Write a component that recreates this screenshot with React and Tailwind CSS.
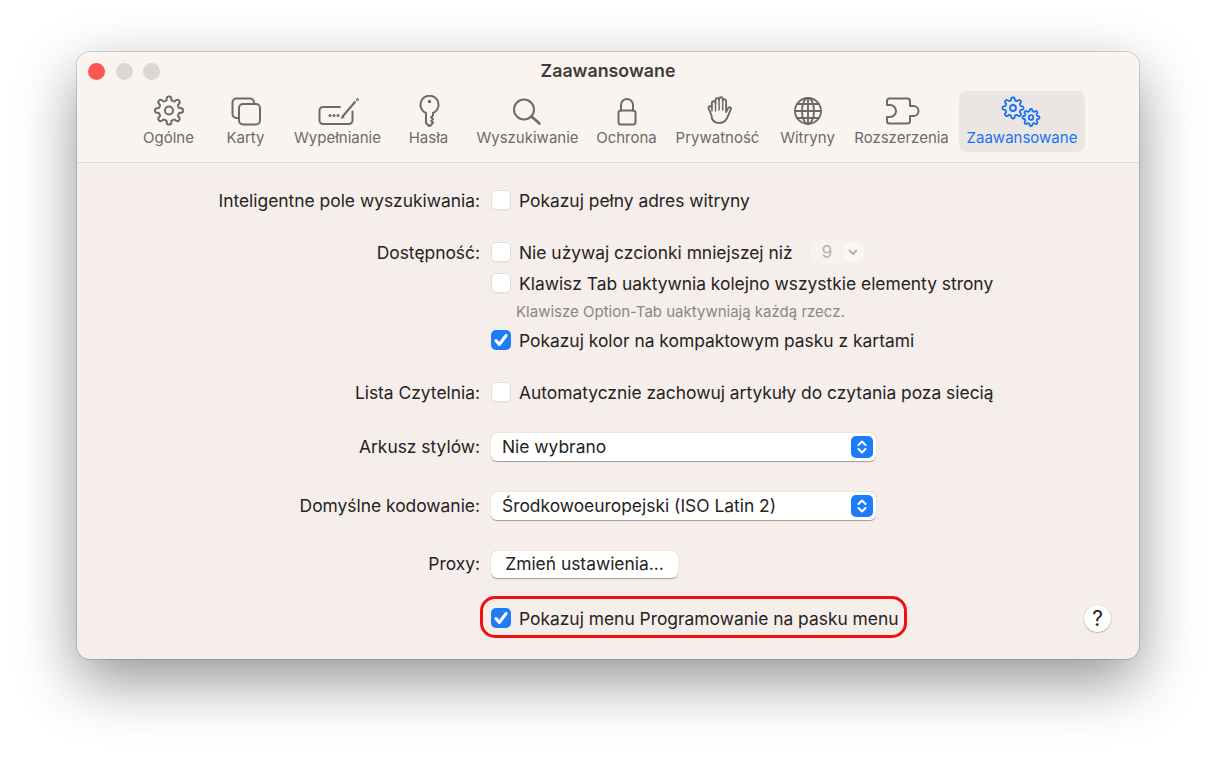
import React from "react";

const gear = (cx, cy, ro, ri, n = 8) => {
  let d = "";
  const step = (Math.PI * 2) / n;
  const p = (r, a) => `${(cx + r * Math.cos(a)).toFixed(2)} ${(cy + r * Math.sin(a)).toFixed(2)}`;
  for (let i = 0; i < n; i++) {
    const a = i * step - Math.PI / 2;
    const w = step * 0.2;
    d += `${i === 0 ? "M" : "L"}${p(ri, a - step * 0.3)} Q${p(ro, a - w * 1.2)} ${p(ro, a - w * 0.3)} `;
    d += `L${p(ro, a + w * 0.3)} Q${p(ro, a + w * 1.2)} ${p(ri, a + step * 0.3)} `;
    d += `Q${p(ri * 0.93, a + step * 0.5)} ${p(ri, a + step * 0.7)} `;
  }
  return d + "Z";
};

const Svg = ({ x, w, children, sw = 2 }) => (
  <svg width={w} height="32" viewBox={`${x} 95 ${w} 32`} fill="none" stroke="currentColor" strokeWidth={sw} strokeLinecap="round" strokeLinejoin="round">
    {children}
  </svg>
);

const icons = {
  gear: (
    <Svg x={153} w={32}>
      <path d={gear(169, 110.500, 14, 10.500)} />
      <circle cx="169" cy="110.500" r="4" />
    </Svg>
  ),
  tabs: (
    <Svg x={229} w={32}>
      <path d="M238 118h-2.500a4 4 0 0 1-4-4v-11.500a4 4 0 0 1 4-4h13.500a4 4 0 0 1 4 4v1.500" />
      <rect x="238" y="104" width="21" height="20.500" rx="4" />
    </Svg>
  ),
  fill: (
    <Svg x={316} w={42}>
      <path d="M339 107h-17a3.500 3.500 0 0 0-3.500 3.500v10a3.500 3.500 0 0 0 3.500 3.500h26a3.500 3.500 0 0 0 3.500-3.500v-9" />
      <path d="M342 116l12-14" />
      <path d="M340.500 118l1-2.500 1.500 1.500z" fill="currentColor" strokeWidth="1" />
      <circle cx="356.500" cy="99.500" r="0.500" />
      <circle cx="329" cy="115.500" r="1.500" fill="currentColor" stroke="none" />
      <circle cx="333" cy="115.500" r="1.500" fill="currentColor" stroke="none" />
      <circle cx="337" cy="115.500" r="1.500" fill="currentColor" stroke="none" />
    </Svg>
  ),
  key: (
    <Svg x={416} w={24}>
      <path d="M425 113a9 9 0 1 1 7 0v2.500l-1.800 1.800 1.800 1.800-1.800 1.800 1.800 1.800-3.500 3.800-3.500-3.500z" />
      <circle cx="428.500" cy="101.500" r="1.700" fill="currentColor" stroke="none" />
    </Svg>
  ),
  search: (
    <Svg x={511} w={32}>
      <circle cx="523" cy="109.500" r="10" />
      <path d="M530.500 116.500l8 7" strokeWidth="2.600" />
    </Svg>
  ),
  lock: (
    <Svg x={614} w={24}>
      <rect x="617.500" y="110.500" width="17" height="14" rx="2.500" />
      <path d="M620 110.500v-5.500a6 6 0 0 1 12 0v5.500" />
    </Svg>
  ),
  hand: (
    <Svg x={703} w={30} sw={1.900}>
      <path d="M708.500 108a1.700 1.700 0 0 1 3.400 0v-5a1.800 1.800 0 0 1 3.600 0v-3a1.800 1.800 0 0 1 3.600 0v-1a1.800 1.800 0 0 1 3.600 0v1.500a1.800 1.800 0 0 1 3.400 0v11.500l1.800-3.500c1.500-2.500 3.800-.8 2.800 1.200l-3 7c-1.500 4-4 6.300-8 6.300-5 0-8.200-2.500-8.200-7.500z" />
      <path d="M711.900 108v3M715.500 103v8M719.100 100v10M722.700 99.500v10.500" strokeWidth="1.500" />
    </Svg>
  ),
  globe: (
    <Svg x={792} w={30} sw={1.900}>
      <circle cx="807" cy="111" r="13" />
      <ellipse cx="807" cy="111" rx="6" ry="13" />
      <path d="M807 98v26M794 111h26M796 104h22M796 118h22" />
    </Svg>
  ),
  puzzle: (
    <Svg x={885} w={36}>
      <path d="M888 105v-4a2.500 2.500 0 0 1 2.500-2.500h18a2.500 2.500 0 0 1 2.500 2.500v5h3.500a5 5 0 0 1 0 10h-3.500v5a2.500 2.500 0 0 1-2.500 2.500h-18a2.500 2.500 0 0 1-2.500-2.500v-4h3a6 6 0 0 0 0-12z" />
    </Svg>
  ),
  adv: (
    <Svg x={1002} w={42} sw={1.800}>
      <path d={gear(1014, 108, 10.500, 8)} />
      <circle cx="1014" cy="108" r="3" />
      <path d={gear(1032, 117.500, 8.500, 6.500)} />
      <circle cx="1032" cy="117.500" r="2.300" />
    </Svg>
  ),
};

const tabs = [
  ["Ogólne", "gear", "w-[77px]"],
  ["Karty", "tabs", "w-[77px]"],
  ["Wypełnianie", "fill", "w-[107px]"],
  ["Hasła", "key", "w-[75px]"],
  ["Wyszukiwanie", "search", "w-[123px]"],
  ["Ochrona", "lock", "w-[75px]"],
  ["Prywatność", "hand", "w-[107px]"],
  ["Witryny", "globe", "w-[73px]"],
  ["Rozszerzenia", "puzzle", "w-[115px]"],
];

const Check = ({ on }) =>
  on ? (
    <span className="flex h-5 w-5 shrink-0 items-center justify-center rounded-[5px] bg-[#1e7cf7]">
      <svg width="18" height="18" viewBox="0 0 16 16" fill="none" stroke="#fff" strokeWidth="2.700" strokeLinecap="round" strokeLinejoin="round">
        <path d="M3.500 8.500l3 3.500 6-8" />
      </svg>
    </span>
  ) : (
    <span className="h-5 w-5 shrink-0 rounded-[5px] border border-[#e4dedb] bg-white shadow-[0_1px_1px_rgba(0,0,0,0.04)]" />
  );

const Row = ({ label, mt, children }) => (
  <div className={`flex h-7 items-center ${mt}`}>
    <div className="mt-[2px] w-[403px] shrink-0 text-right text-[#262323]">{label}</div>
    <div className="ml-[11px] flex flex-1 items-center">{children}</div>
  </div>
);

const Opt = ({ on, children }) => (
  <div className="flex items-center gap-2 whitespace-nowrap text-[#262323]">
    <Check on={on} />
    <span className="mt-[2px]">{children}</span>
  </div>
);

const Select = ({ children }) => (
  <div className="mt-[2px] flex h-7 w-[385px] items-center justify-between rounded-[6px] bg-white pl-3 pr-[3px] text-[#262323] shadow-[0_0.500px_1px_rgba(0,0,0,0.35)]">
    <span className="-ml-[1px]">{children}</span>
    <span className="flex h-[22px] w-[22px] items-center justify-center rounded-[5px] bg-[#1e7cf7]">
      <svg width="14" height="18" viewBox="0 0 14 18" fill="none" stroke="#fff" strokeWidth="2" strokeLinecap="round" strokeLinejoin="round">
        <path d="M3.500 7l3.500-3.500 3.500 3.500M3.500 11l3.500 3.500 3.500-3.500" />
      </svg>
    </span>
  </div>
);

export default function App() {
  return (
    <div className="h-[761px] w-full overflow-hidden bg-white pl-[77px] pt-[52px] text-[17.400px] leading-6 [font-family:Inter,'Liberation_Sans',sans-serif]">
      <div className="flex h-[607px] w-[1062px] flex-col overflow-hidden rounded-[13px] bg-[#f5eeeb] shadow-[0_0_0_1px_rgba(0,0,0,0.14),0_22px_60px_rgba(0,0,0,0.42)]">
        <div className="h-[111px] shrink-0 border-b border-[#dedad7] bg-[#faf4f1]">
          <div className="relative flex h-[39px] items-center justify-center text-[17.800px] font-semibold text-[#3f3c3b]">
            <div className="absolute left-[11px] top-[11px] flex gap-[10.500px]">
              <span className="h-[17px] w-[17px] rounded-full bg-[#fd5550]" />
              <span className="h-[17px] w-[17px] rounded-full bg-[#dcd7d4]" />
              <span className="h-[17px] w-[17px] rounded-full bg-[#dcd7d4]" />
            </div>
            <span className="mb-[1px]">Zaawansowane</span>
          </div>
          <div className="ml-[53px] flex h-[61px]">
            {tabs.map(([t, ic, w]) => (
              <div key={t} className={`flex shrink-0 flex-col items-center pt-1 text-[#6e6a68] ${w}`}>
                {icons[ic]}
                <span className="mt-[1px] whitespace-nowrap text-[15px] leading-5">{t}</span>
              </div>
            ))}
            <div className="flex w-[126px] shrink-0 flex-col items-center rounded-[8px] bg-[#ebe6e3] pt-1 text-[#1a73f0]">
              {icons.adv}
              <span className="mt-[1px] whitespace-nowrap text-[15px] leading-5">Zaawansowane</span>
            </div>
          </div>
        </div>

        <div className="relative flex-1 pt-[23px]">
          <Row label="Inteligentne pole wyszukiwania:">
            <Opt>Pokazuj pełny adres witryny</Opt>
          </Row>
          <Row label="Dostępność:" mt="mt-6">
            <Opt>Nie używaj czcionki mniejszej niż</Opt>
            <div className="ml-[17px] flex h-[26px] w-[57px] items-center justify-between rounded-[6px] bg-[#f8f2ef] pl-[12px] pr-[3px] text-[#b5b1af] shadow-[0_0_1px_rgba(0,0,0,0.12)]">
              <span>9</span>
              <span className="flex h-[22px] w-[21px] items-center justify-center rounded-[5px] bg-[#faf6f4] shadow-[0_0_1px_rgba(0,0,0,0.15)]">
                <svg width="12" height="12" viewBox="0 0 12 12" fill="none" stroke="#b5b1af" strokeWidth="1.800" strokeLinecap="round" strokeLinejoin="round">
                  <path d="M2.500 4.500l3.500 3.500 3.500-3.500" />
                </svg>
              </span>
            </div>
          </Row>
          <Row mt="mt-[3px]">
            <Opt>Klawisz Tab uaktywnia kolejno wszystkie elementy strony</Opt>
          </Row>
          <Row>
            <span className="ml-[25px] mt-[1px] text-[15px] text-[#8a8684]">Klawisze Option-Tab uaktywniają każdą rzecz.</span>
          </Row>
          <Row mt="mt-[1px]">
            <Opt on>Pokazuj kolor na kompaktowym pasku z kartami</Opt>
          </Row>
          <Row label="Lista Czytelnia:" mt="mt-6">
            <Opt>Automatycznie zachowuj artykuły do czytania poza siecią</Opt>
          </Row>
          <Row label="Arkusz stylów:" mt="mt-[26px]">
            <Select>Nie wybrano</Select>
          </Row>
          <Row label="Domyślne kodowanie:" mt="mt-[31px]">
            <Select>Środkowoeuropejski (ISO Latin 2)</Select>
          </Row>
          <Row label="Proxy:" mt="mt-[30px]">
            <div className="mt-[2px] flex h-[27px] w-[187px] items-center justify-center rounded-[6px] bg-white text-[#262323] shadow-[0_0.500px_1px_rgba(0,0,0,0.35)]">
              Zmień ustawienia...
            </div>
          </Row>
          <Row mt="mt-[27px]">
            <div className="relative">
              <Opt on>Pokazuj menu Programowanie na pasku menu</Opt>
              <div className="absolute -left-[11px] -top-[9px] h-[42px] w-[427px] rounded-[15px] border-[3px] border-[#f20f0f]" />
            </div>
          </Row>
          <div className="absolute bottom-[27px] left-[1007px] flex h-[27px] w-[27px] items-center justify-center rounded-full bg-white text-[21px] font-normal text-[#262323] shadow-[0_0.500px_1.500px_rgba(0,0,0,0.4)]">
            ?
          </div>
        </div>
      </div>
    </div>
  );
}
